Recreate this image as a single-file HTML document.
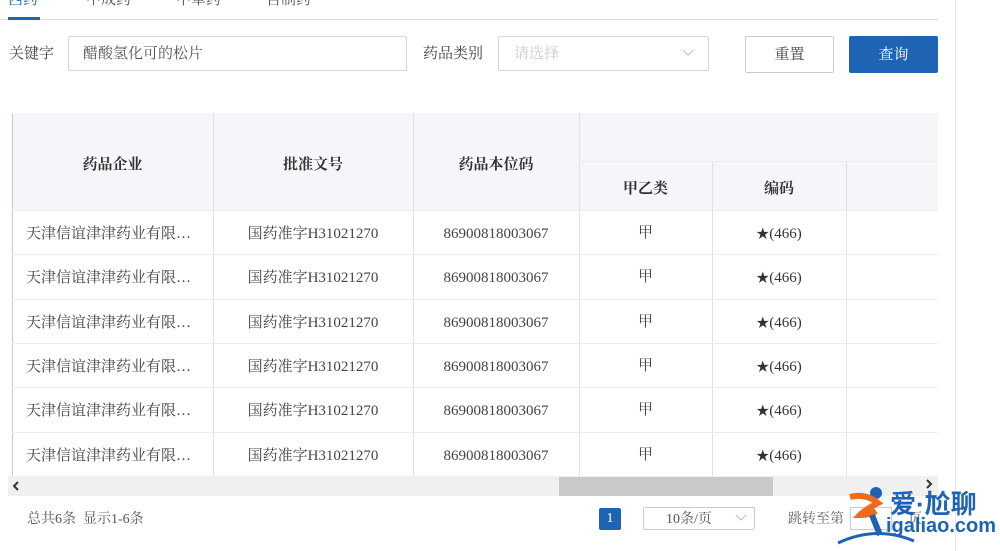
<!DOCTYPE html>
<html><head><meta charset="utf-8"><style>
*{margin:0;padding:0;box-sizing:border-box}
body{width:1000px;height:551px;background:#fff;position:relative;overflow:hidden;font-family:"Liberation Serif","Noto Serif CJK SC",serif;color:#333;font-size:14px}
.a{position:absolute}
.c{text-align:center}
.vl{position:absolute;width:1px;background:#dfe2e6}
.hl{position:absolute;height:1px;background:#ebedf0}
.cell{position:absolute;height:44px;line-height:44px;font-size:15px;color:#444;white-space:nowrap}
</style></head><body>
<div class="a" style="left:8px;top:-12px;font-size:15px;color:#1f64b4">西药</div>
<div class="a" style="left:86px;top:-12px;font-size:15px;color:#555">中成药</div>
<div class="a" style="left:176px;top:-12px;font-size:15px;color:#555">中草药</div>
<div class="a" style="left:266px;top:-12px;font-size:15px;color:#555">自制药</div>
<div class="a" style="left:0;top:19px;width:938px;height:1px;background:#d8dbe0"></div>
<div class="a" style="left:8px;top:17px;width:32px;height:3px;background:#1f64b4"></div>
<div class="a" style="left:955px;top:0;width:1px;height:551px;background:#e6e8eb"></div>

<div class="a" style="left:9px;top:37px;height:35px;line-height:35px;font-size:15px;color:#444">关键字</div>
<div class="a" style="left:68px;top:36px;width:339px;height:35px;border:1px solid #d3d6db;border-radius:2px"></div>
<div class="a" style="left:83px;top:37px;height:35px;line-height:35px;font-size:15px;color:#555">醋酸氢化可的松片</div>
<div class="a" style="left:423px;top:37px;height:35px;line-height:35px;font-size:15px;color:#444">药品类别</div>
<div class="a" style="left:498px;top:36px;width:211px;height:35px;border:1px solid #d3d6db;border-radius:2px"></div>
<div class="a" style="left:514px;top:37px;height:35px;line-height:35px;font-size:15px;color:#ccc">请选择</div>
<svg class="a" style="left:682px;top:49px" width="12" height="8"><path d="M1 1 L6 6 L11 1" stroke="#bbb" fill="none"/></svg>
<div class="a c" style="left:745px;top:36px;width:89px;height:37px;border:1px solid #c8ccd2;border-radius:2px;line-height:37px;font-size:15px;color:#444">重置</div>
<div class="a c" style="left:849px;top:36px;width:89px;height:37px;background:#1f64b4;border-radius:2px;line-height:38px;font-size:15px;color:#fff">查询</div>

<div class="a" style="left:12px;top:113px;width:926px;height:97px;background:#f5f6f9"></div>
<div class="a" style="left:12px;top:113px;width:1px;height:363px;background:#c8ccd2"></div>
<div class="vl" style="left:213px;top:113px;height:363px"></div>
<div class="vl" style="left:413px;top:113px;height:363px"></div>
<div class="vl" style="left:579px;top:113px;height:363px"></div>
<div class="vl" style="left:712px;top:162px;height:314px"></div>
<div class="vl" style="left:846px;top:162px;height:314px"></div>
<div class="hl" style="left:579px;top:161px;width:359px"></div>
<div class="cell c" style="left:12px;top:143px;width:201px;font-weight:bold;color:#333">药品企业</div>
<div class="cell c" style="left:213px;top:143px;width:200px;font-weight:bold;color:#333">批准文号</div>
<div class="cell c" style="left:413px;top:143px;width:166px;font-weight:bold;color:#333">药品本位码</div>
<div class="cell c" style="left:579px;top:167px;width:133px;font-weight:bold;color:#333">甲乙类</div>
<div class="cell c" style="left:712px;top:167px;width:134px;font-weight:bold;color:#333">编码</div>
<div id="rows"></div>
<script>
var h='';var ys=[210,254,299,343,387,432];
ys.forEach(function(y){
h+='<div class="hl" style="left:12px;top:'+(y)+'px;width:926px"></div>';
h+='<div class="cell" style="left:26px;top:'+(y+2)+'px">天津信谊津津药业有限…</div>';
h+='<div class="cell c" style="left:213px;top:'+(y+2)+'px;width:200px">国药准字H31021270</div>';
h+='<div class="cell c" style="left:413px;top:'+(y+2)+'px;width:166px">86900818003067</div>';
h+='<div class="cell c" style="left:579px;top:'+(y+1)+'px;width:133px">甲</div>';
h+='<div class="cell c" style="left:712px;top:'+(y+2)+'px;width:134px;color:#333"><span style="font-size:13px">★</span>(466)</div>';
});
document.getElementById('rows').innerHTML=h;
</script>
<div class="a" style="left:8px;top:476px;width:930px;height:20px;background:#f0f0f0"></div>
<div class="a" style="left:559px;top:477px;width:214px;height:19px;background:#c9c9c9"></div>
<svg class="a" style="left:12px;top:481px" width="8" height="10"><path d="M6 1 L2 5 L6 9" stroke="#333" stroke-width="2" fill="none"/></svg>
<svg class="a" style="left:925px;top:479px" width="8" height="10"><path d="M2 1 L6 5 L2 9" stroke="#333" stroke-width="2" fill="none"/></svg>

<div class="a" style="left:27px;top:509px;height:22px;line-height:22px;font-size:14px;color:#555">总共6条&nbsp;&nbsp;显示1-6条</div>
<div class="a c" style="left:599px;top:508px;width:22px;height:22px;background:#1f64b4;color:#fff;line-height:22px;font-size:14px;border-radius:2px">1</div>
<div class="a" style="left:643px;top:507px;width:112px;height:23px;border:1px solid #c8ccd2;border-radius:2px"></div>
<div class="a" style="left:666px;top:509px;height:22px;line-height:22px;font-size:14px;color:#555">10条/页</div>
<svg class="a" style="left:735px;top:514px" width="12" height="8"><path d="M1 1 L6 6 L11 1" stroke="#bbb" fill="none"/></svg>
<div class="a" style="left:788px;top:509px;height:22px;line-height:22px;font-size:14px;color:#666">跳转至第</div>
<div class="a" style="left:850px;top:507px;width:42px;height:23px;border:1px solid #c8ccd2"></div>
<div class="a" style="left:908px;top:509px;height:22px;line-height:22px;font-size:14px;color:#666">页</div>
<svg class="a" style="left:836px;top:485px" width="80" height="60"><circle cx="40" cy="8" r="6" fill="#1f64b4"/><path d="M14 12 Q30 8 42 18 Q30 24 24 30 Q34 30 40 26" stroke="#f06a1e" stroke-width="6" fill="none"/><path d="M2 58 Q40 40 78 56" stroke="#1f64b4" stroke-width="3" fill="none"/><path d="M36 30 L44 50" stroke="#1f64b4" stroke-width="6"/></svg>
<div class="a" style="left:890px;top:484px;font-size:26px;font-weight:bold;color:#1f64b4;font-family:'Liberation Sans','Noto Sans CJK SC',sans-serif">爱·尬聊</div>
<div class="a" style="left:886px;top:515px;font-size:20px;font-weight:bold;color:#1f64b4;font-family:'Liberation Sans',sans-serif">igaliao.com</div>
</body></html>
